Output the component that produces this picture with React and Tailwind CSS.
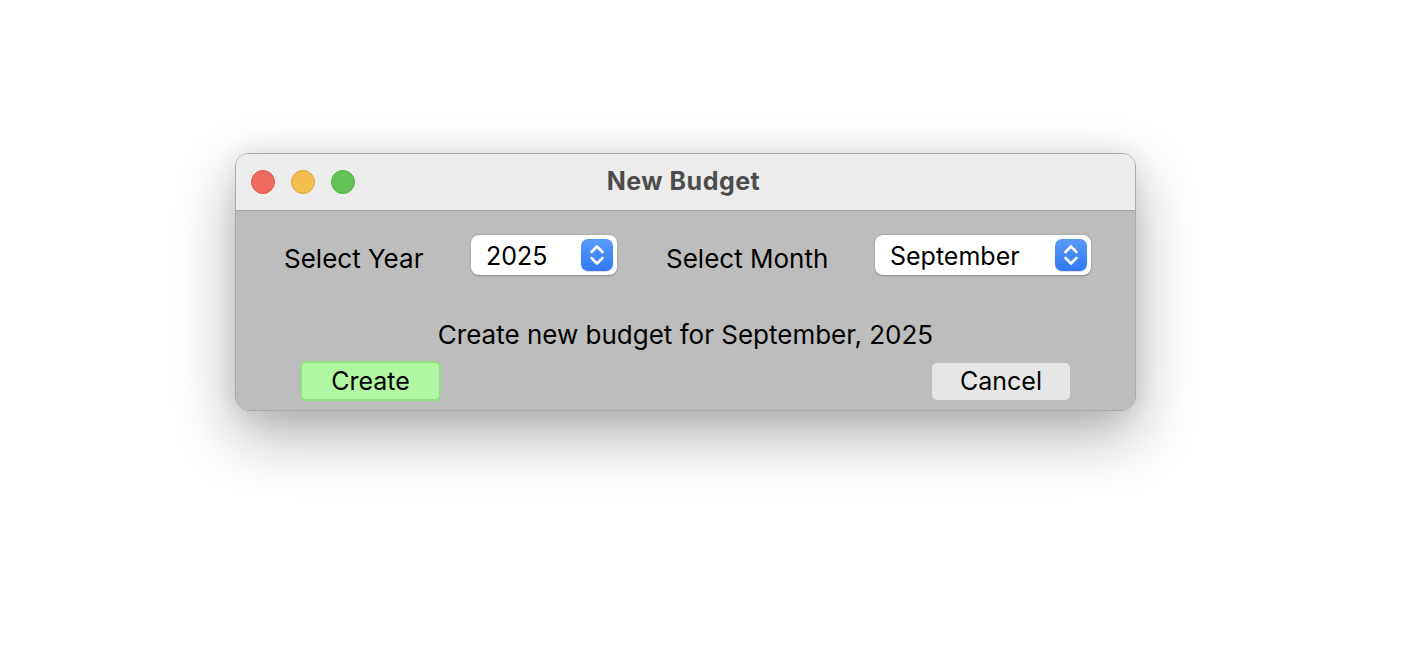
import React, { useState } from "react";

const font = { fontFamily: "Inter, 'Liberation Sans', Arial, sans-serif" };

function Stepper() {
  return (
    <div className="w-[32px] h-[32px] rounded-[7px] bg-gradient-to-b from-[#5a9bf8] to-[#3077f5] flex items-center justify-center shadow-[0_1px_1px_rgba(0,0,0,0.15)]">
      <svg width="32" height="32" viewBox="0 0 32 32" fill="none" stroke="white" strokeWidth="2.6" strokeLinecap="round" strokeLinejoin="round">
        <polyline points="10.5,13 16,7.5 21.5,13" />
        <polyline points="10.5,19 16,24.5 21.5,19" />
      </svg>
    </div>
  );
}

function Select({ value, width }) {
  return (
    <div className={`${width} h-[40px] bg-white rounded-[8px] flex items-center justify-between pl-[15px] pr-[4px] shadow-[0_0.5px_2px_rgba(0,0,0,0.3)]`}>
      <span className="text-[25px] leading-none text-black pt-[3px]">{value}</span>
      <Stepper />
    </div>
  );
}

export default function App() {
  const [year] = useState("2025");
  const [month] = useState("September");

  return (
    <div className="min-h-screen bg-white pt-[153px] pl-[235px]" style={font}>
      <div className="w-[901px] rounded-[13px] border border-[#a9a9a9] overflow-hidden shadow-[0_24px_60px_rgba(0,0,0,0.32),0_0_24px_rgba(0,0,0,0.08)]">
        {/* title bar */}
        <div className="relative h-[57px] bg-[#ececec] border-b border-[#a3a3a3] flex items-center justify-center pr-[4px]">
          <div className="absolute left-[15px] top-[16px] flex gap-[16px]">
            <span className="w-[24px] h-[24px] rounded-full bg-[#ee6a5e] border border-[#d8574c]" />
            <span className="w-[24px] h-[24px] rounded-full bg-[#f5bf4f] border border-[#dba73a]" />
            <span className="w-[24px] h-[24px] rounded-full bg-[#61c454] border border-[#4fad43]" />
          </div>
          <span className="text-[25px] font-bold tracking-[0.5px] text-[#4d4d4d]">New Budget</span>
        </div>

        {/* body */}
        <div className="bg-[#bdbdbd] pt-[24px] pb-[9px]">
          <div className="flex items-center pl-[48px]">
            <span className="w-[187px] text-[26px] leading-[30px] text-black pt-[7px]">Select Year</span>
            <Select value={year} width="w-[146px]" />
            <span className="ml-[49px] w-[209px] text-[26px] leading-[30px] text-black pt-[7px]">Select Month</span>
            <Select value={month} width="w-[216px]" />
          </div>

          <div className="mt-[44px] text-center text-[26px] leading-[32px] text-black">
            Create new budget for {month}, {year}
          </div>

          <div className="mt-[10px] flex items-center justify-between pl-[64px] pr-[65px]">
            <button className="w-[141px] h-[40px] rounded-[6px] bg-[#b1f6a3] border-2 border-[#8fdf7f] text-[25px] leading-none text-black">
              Create
            </button>
            <button className="w-[138px] h-[37px] rounded-[5px] bg-[#e6e6e6] text-[25px] leading-none text-black">
              Cancel
            </button>
          </div>
        </div>
      </div>
    </div>
  );
}
